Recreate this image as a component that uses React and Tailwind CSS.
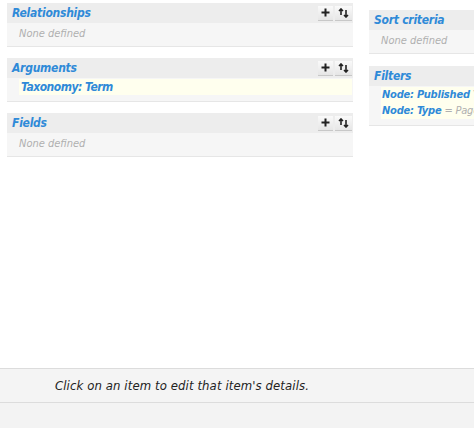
const FONT = "font-['DejaVu_Sans',sans-serif] [font-stretch:condensed]";

function Buttons() {
  return (
    <div className="flex gap-[2px]">
      <span className="flex h-[15px] w-[15px] items-center justify-center border-b border-[#c8c8c8] bg-gradient-to-b from-[#fafafa] to-[#e6e6e6]">
        <svg width="9" height="9" viewBox="0 0 9 9">
          <path d="M4.5 0.5v8M0.5 4.5h8" stroke="#222" strokeWidth="2" />
        </svg>
      </span>
      <span className="flex h-[15px] w-[17px] items-center justify-center border-b border-[#c8c8c8] bg-gradient-to-b from-[#fafafa] to-[#e6e6e6]">
        <svg width="11" height="10" viewBox="0 0 11 10">
          <path d="M3 1v6M1 3l2-2 2 2" stroke="#222" strokeWidth="1.6" fill="none" />
          <path d="M8 2v7M6 7l2 2 2-2" stroke="#222" strokeWidth="1.6" fill="none" />
        </svg>
      </span>
    </div>
  );
}

function Box({ title, buttons, children }) {
  return (
    <div className="border-b border-[#e6e6e6] bg-[#f6f6f6]">
      <div className="flex h-[20px] items-center justify-between bg-[#ededed] pl-[5px] pr-[1px]">
        <span className="text-[12px] font-bold italic tracking-[-0.25px] text-[#2f8ad8]">{title}</span>
        {buttons && <Buttons />}
      </div>
      <div className="pl-[12px] pr-[1px] pt-[1px] pb-[6px]">{children}</div>
    </div>
  );
}

function None() {
  return <div className="h-[16px] pt-[2px] text-[11px] italic text-[#b0b0b0]">None defined</div>;
}

export default function App() {
  return (
    <div className={`flex h-[428px] w-[474px] flex-col overflow-hidden bg-white ${FONT}`}>
      <div className="flex flex-1 gap-[16px] pl-[7px]">
        <div className="flex w-[346px] shrink-0 flex-col gap-[11px] pt-[3px]">
          <Box title="Relationships" buttons>
            <None />
          </Box>
          <Box title="Arguments" buttons>
            <div className="bg-[#ffffee] pl-[2px] text-[12px] font-bold italic leading-[16px] tracking-[-0.5px] text-[#2f8ad8]">
              Taxonomy: Term
            </div>
          </Box>
          <Box title="Fields" buttons>
            <None />
          </Box>
        </div>
        <div className="flex w-[346px] shrink-0 flex-col gap-[12px] pt-[10px]">
          <Box title="Sort criteria" buttons>
            <None />
          </Box>
          <Box title="Filters" buttons>
            <div className="bg-[#ffffee] pl-[1px] text-[11px] leading-[16px] tracking-[-0.2px]">
              <div className="whitespace-nowrap">
                <span className="font-bold italic text-[#2f8ad8]">Node: Published</span>
                <span className="italic text-[#b0b0b0]"> Yes</span>
              </div>
              <div className="whitespace-nowrap">
                <span className="font-bold italic text-[#2f8ad8]">Node: Type</span>
                <span className="italic text-[#b0b0b0]"> = Page</span>
              </div>
            </div>
          </Box>
        </div>
      </div>
      <div className="flex h-[35px] items-center border-y border-[#dcdcdc] bg-[#f4f4f4] pl-[55px] text-[13px] italic tracking-[0.1px] text-[#222]">
        Click on an item to edit that item's details.
      </div>
      <div className="h-[25px] bg-[#f3f3f3]" />
    </div>
  );
}
